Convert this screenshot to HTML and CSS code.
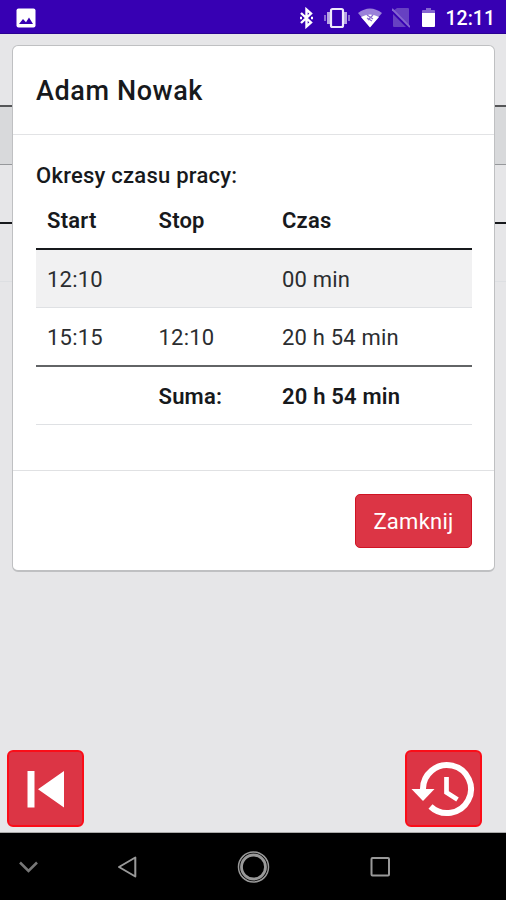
FILE: index.html
```
<!DOCTYPE html>
<html lang="pl">
<head>
<meta charset="utf-8">
<title>Czas pracy</title>
<link rel="stylesheet" href="styles.css">
</head>
<body>
<div class="phone">
  <header class="status">
    <svg class="status-photo" width="20" height="20" viewBox="0 0 20 20"><rect x=".5" y=".5" width="19" height="19" rx="2" fill="#fff"/><path d="M3 16l4-5 3 3.200 3-4.700 4 6.500z" fill="#3700b3"/></svg>
    <div class="status-icons">
      <svg width="16" height="22" viewBox="0 0 16 22" fill="none" stroke="#fff" stroke-width="2.400"><path d="M2 6l10 9.500-4.500 4V2.500l4.500 4L2 16"/><path d="M1 11h2M12 11h2"/></svg>
      <svg width="26" height="22" viewBox="0 0 26 22"><path d="M4.500 5v12M21.500 5v12" stroke="#b6a3e3" stroke-width="3"/><path d="M1 8v6M25 8v6" stroke="#8a6bd2" stroke-width="2"/><rect x="7" y="2" width="12" height="18" rx="1.500" fill="none" stroke="#eee9fb" stroke-width="2.200"/></svg>
      <svg width="24" height="22" viewBox="0 0 24 22"><path d="M0 6Q12-3 24 6L12 20z" fill="#9a80d9"/><path d="M3 10Q12 5 21 10l-9 10.500z" fill="#fff"/><path d="M9 8l6 4M10 13l5-5M9 11l5 3" stroke="#8a6bd2" stroke-width="1.200"/></svg>
      <svg width="18" height="22" viewBox="0 0 18 22"><path d="M5 1h11q1 0 1 1v17L1 4zM1 7l13 13H2q-1 0-1-1z" fill="#6741c2"/><path d="M0 2l18 18" stroke="#8566d0" stroke-width="1.800"/></svg>
      <svg width="13" height="22" viewBox="0 0 13 22"><path d="M1 3h3V1h5v2h3q1 0 1 1v3H0V4q0-1 1-1z" fill="#8566d0"/><path d="M0 6h13v13q0 1-1 1H1q-1 0-1-1z" fill="#fff"/></svg>
    </div>
    <span class="clock">12:11</span>
  </header>

  <main class="app">
    <div class="backdrop-table">
      <div class="back-head"></div>
      <div class="back-row striped"></div>
      <div class="back-row"></div>
      <div class="back-sum"></div>
    </div>

    <section class="modal">
      <h1 class="modal-title">Adam Nowak</h1>
      <div class="modal-body">
        <p class="caption">Okresy czasu pracy:</p>
        <div class="table">
          <div class="row head"><span>Start</span><span>Stop</span><span>Czas</span></div>
          <div class="row striped"><span>12:10</span><span></span><span>00 min</span></div>
          <div class="row last"><span>15:15</span><span>12:10</span><span>20 h 54 min</span></div>
          <div class="row sum"><span></span><span>Suma:</span><span>20 h 54 min</span></div>
        </div>
      </div>
      <footer class="modal-footer"><button class="close">Zamknij</button></footer>
    </section>

    <div class="actions">
      <button class="square" aria-label="Wstecz"><svg width="76" height="76" viewBox="0 0 76 76"><path d="M19.500 20h7v36.500h-7zM56 20v36.500L30 38.300z" fill="#fff"/></svg></button>
      <button class="square" aria-label="Historia"><svg width="76" height="76" viewBox="0 0 76 76"><g fill="none" stroke="#fff"><path d="M17 39A24 24 0 1 1 24.500 55.500" stroke-width="6"/><path d="M40.500 26v15.500l11 7" stroke-width="4.700"/></g><path d="M5.500 38h23L17 50z" fill="#fff"/></svg></button>
    </div>
  </main>

  <nav class="navbar">
    <svg width="506" height="67" viewBox="0 0 506 67" fill="none" stroke="#999"><path d="M20 29.500l8.500 8.500 8.500-8.500" stroke="#777" stroke-width="2.500"/><path d="M135.300 24.500v19L119 34z" stroke-width="2" stroke-linejoin="round"/><circle cx="253.500" cy="34" r="15" stroke-width="1.500"/><circle cx="253.500" cy="34" r="12" stroke-width="2.800"/><rect x="371.500" y="25" width="17.500" height="17.500" rx="1" stroke-width="2"/></svg>
  </nav>
</div>
</body>
</html>
```
FILE: styles.css
```
* { box-sizing: border-box; }
body { margin: 0; font-family: Roboto, sans-serif; color: #17191c; }
.phone { width: 506px; height: 900px; display: flex; flex-direction: column; overflow: hidden; }
.status { height: 34px; background: #3700b3; border-bottom: 1px solid #2a0092; display: flex; align-items: center; padding: 2px 11px 0 16px; flex: none; }
.status-photo { margin-right: auto; }
.status-icons { display: grid; grid-template-columns: 25px 34px 34px 30px 13px; margin-right: 11px; }
.clock { color: #fff; font-size: 19.5px; font-weight: 500; line-height: 34px; padding-top: 2px; }
.app { display: grid; grid-template-rows: auto 1fr; height: 799px; background: #e6e6e8; border-bottom: 1px solid #aaa; }
.backdrop-table, .modal { grid-column: 1; grid-row: 1; }
.back-head { height: 73px; border-bottom: 2px solid #555658; }
.back-row { height: 58px; }
.back-row.striped { background: #d8d9db; border-bottom: 1px solid #96989b; }
.back-row:not(.striped) { height: 57px; }
.back-sum { height: 60px; border-top: 2px solid #17191c; border-bottom: 1px solid #dddfe2; }
.modal { position: relative; align-self: start; margin: 11px 11px 0 12px; height: 527px; background: #fff; border: 1px solid #bfc0c2; border-bottom-width: 2px; border-radius: 6px; display: flex; flex-direction: column; }
.modal-title { margin: 0; height: 89px; padding: 0 23px; font-size: 27px; line-height: 90px; font-weight: 500; letter-spacing: .6px; border-bottom: 1px solid #e2e3e5; }
.modal-body { height: 336px; padding: 27px 22.5px 0 23px; border-bottom: 1px solid #e0e1e3; }
.caption { margin: 0; font-size: 22px; line-height: 27px; font-weight: 500; letter-spacing: .25px; }
.table { margin-top: 3px; font-size: 22px; letter-spacing: .2px; }
.row { display: grid; grid-template-columns: 111.5px 123.5px 1fr; padding-left: 11px; height: 58px; line-height: 59px; border-bottom: 1px solid #dfe1e4; color: #2b2d30; }
.row.head { height: 58px; line-height: 57px; border-bottom: 2px solid #17191c; font-weight: 600; color: #17191c; }
.row.striped { background: #f1f1f2; }
.row.last { height: 59px; border-bottom: 2px solid #626466; }
.row.sum { font-weight: 600; color: #17191c; }
.modal-footer { display: flex; justify-content: flex-end; padding: 23px 22px 0; }
.close { width: 117px; height: 54px; border: 1px solid #cf1424; border-radius: 5px; background: #dc3545; color: #fff; font: 400 22px Roboto, sans-serif; letter-spacing: .25px; padding: 0; }
.actions { grid-column: 1; grid-row: 2; align-self: end; display: flex; justify-content: space-between; padding: 0 24px 5px 7px; }
.square { width: 77px; height: 77px; padding: 0; border: 2px solid #fb0d18; border-radius: 6px; background: #dc3545; display: grid; place-items: center; overflow: hidden; }
.square svg { margin: -2px; }
.navbar { height: 67px; background: #000; }
.navbar svg { display: block; }
```
